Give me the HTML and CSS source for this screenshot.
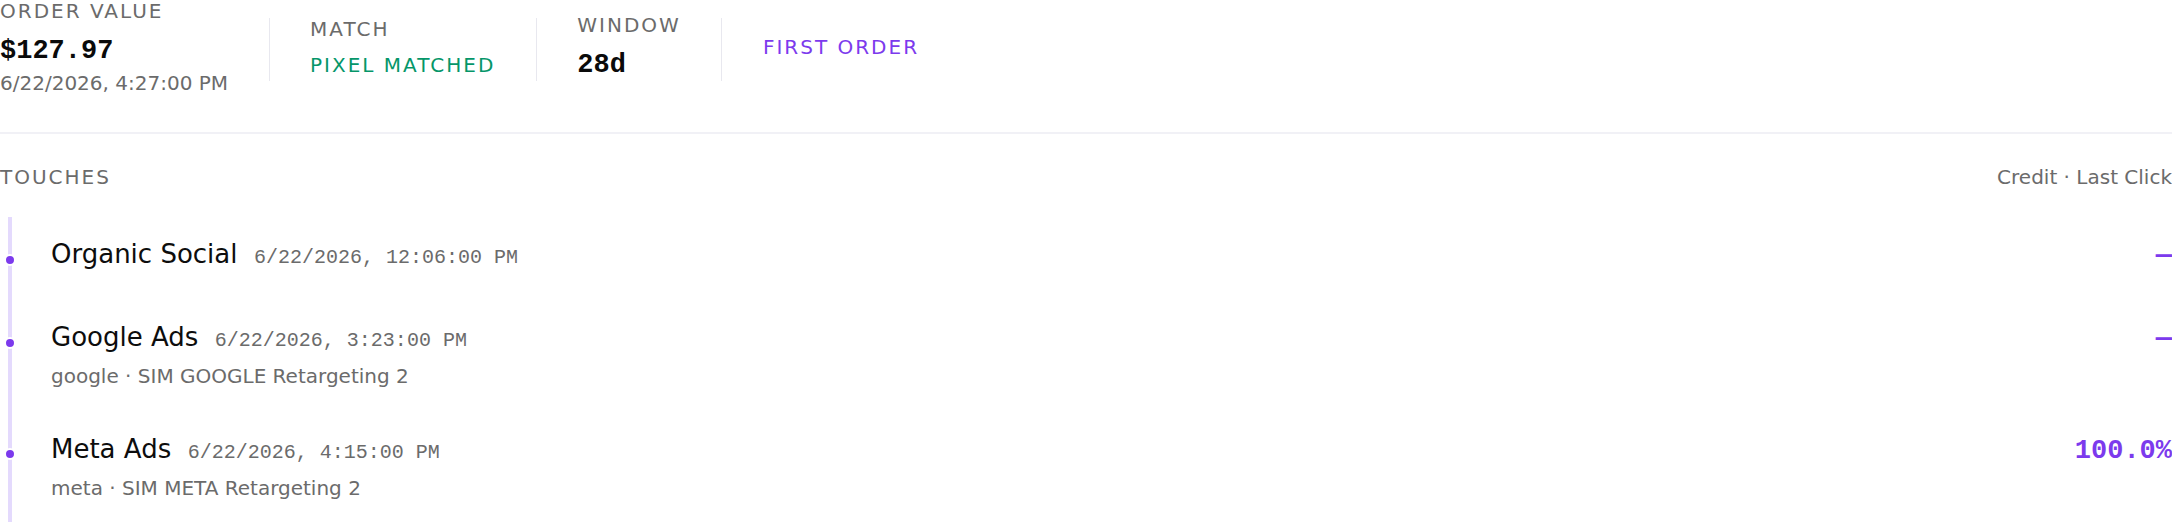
FILE: index.html
```html
<!DOCTYPE html>
<html lang="en">
<head>
<meta charset="utf-8">
<title>Order attribution</title>
<link rel="stylesheet" href="styles.css">
</head>
<body>
<main class="order">
  <header class="summary">
    <div class="stat">
      <div class="label">ORDER VALUE</div>
      <div class="value">$127.97</div>
      <div class="stamp">6/22/2026, 4:27:00 PM</div>
    </div>
    <div class="divider"></div>
    <div class="stat">
      <div class="label">MATCH</div>
      <div class="tag tag-green">PIXEL MATCHED</div>
    </div>
    <div class="divider"></div>
    <div class="stat">
      <div class="label">WINDOW</div>
      <div class="value">28d</div>
    </div>
    <div class="divider"></div>
    <div class="stat">
      <div class="tag tag-purple">FIRST ORDER</div>
    </div>
  </header>

  <section class="touches">
    <div class="touches-head">
      <span class="heading">TOUCHES</span>
      <span class="model">Credit · Last Click</span>
    </div>
    <ol class="timeline">
      <li class="touch">
        <span class="dot"></span>
        <div class="touch-body">
          <div class="touch-title">
            <span class="channel">Organic Social</span>
            <span class="time">6/22/2026, 12:06:00 PM</span>
          </div>
        </div>
        <div class="credit">—</div>
      </li>
      <li class="touch">
        <span class="dot"></span>
        <div class="touch-body">
          <div class="touch-title">
            <span class="channel">Google Ads</span>
            <span class="time">6/22/2026, 3:23:00 PM</span>
          </div>
          <div class="campaign">google · SIM GOOGLE Retargeting 2</div>
        </div>
        <div class="credit">—</div>
      </li>
      <li class="touch">
        <span class="dot"></span>
        <div class="touch-body">
          <div class="touch-title">
            <span class="channel">Meta Ads</span>
            <span class="time">6/22/2026, 4:15:00 PM</span>
          </div>
          <div class="campaign">meta · SIM META Retargeting 2</div>
        </div>
        <div class="credit">100.0%</div>
      </li>
    </ol>
  </section>
</main>
</body>
</html>
```

FILE: styles.css
```css
* {
  box-sizing: border-box;
}

html,
body {
  margin: 0;
  padding: 0;
  background: #ffffff;
}

body {
  font-family: "DejaVu Sans", "Noto Sans", sans-serif;
  color: #111111;
  overflow: hidden;
}

.order {
  width: 100%;
}

/* Summary strip */
.summary {
  display: flex;
  align-items: center;
  gap: 40.5px;
  padding-bottom: 36px;
  border-bottom: 2px solid #f1f1f6;
}

.stat {
  display: flex;
  flex-direction: column;
  align-items: flex-start;
}

.label {
  font-size: 20px;
  line-height: 23.3px;
  letter-spacing: 2px;
  color: #6b6b6b;
  margin-bottom: 12px;
}

.value {
  font-family: "Liberation Mono", monospace;
  font-weight: 700;
  font-size: 27px;
  line-height: 32.4px;
  color: #0a0a0a;
}

.stamp {
  font-size: 20px;
  line-height: 23.3px;
  color: #6b6b6b;
  margin-top: 4.5px;
}

.tag {
  font-size: 20px;
  line-height: 23.3px;
  letter-spacing: 2px;
}

.tag-green {
  color: #059669;
}

.tag-purple {
  color: #7c3aed;
}

.divider {
  align-self: flex-start;
  width: 1px;
  height: 63px;
  margin-top: 18px;
  background: #e8e8ef;
}

/* Touches timeline */
.touches {
  padding-top: 32px;
}

.touches-head {
  display: flex;
  justify-content: space-between;
  align-items: baseline;
  font-size: 20px;
  line-height: 23.3px;
  color: #6b6b6b;
}

.heading {
  letter-spacing: 2px;
}

.timeline {
  list-style: none;
  margin: 25.8px 0 0;
  padding: 0 0 24px;
  position: relative;
}

.timeline::before {
  content: "";
  position: absolute;
  left: 8px;
  top: 2.5px;
  bottom: 0;
  width: 4px;
  background: #e4dafd;
}

.touch {
  position: relative;
  display: flex;
  align-items: baseline;
  justify-content: space-between;
  padding: 20.5px 0 20.5px 51px;
}

.dot {
  position: absolute;
  left: 4px;
  top: 39px;
  width: 12px;
  height: 12px;
  border-radius: 50%;
  background: #7c3aed;
  border: 2px solid #ffffff;
}

.touch-title {
  display: flex;
  align-items: baseline;
  gap: 16.5px;
  line-height: 39px;
}

.channel {
  font-size: 26px;
  color: #0d0d0d;
}

.time {
  font-family: "Liberation Mono", monospace;
  font-size: 20px;
  color: #6b6b6b;
}

.campaign {
  margin-top: 5.3px;
  font-size: 20px;
  line-height: 23.3px;
  color: #6b6b6b;
}

.credit {
  font-family: "Liberation Mono", monospace;
  font-weight: 700;
  font-size: 27px;
  line-height: 1;
  color: #7c3aed;
}
```
